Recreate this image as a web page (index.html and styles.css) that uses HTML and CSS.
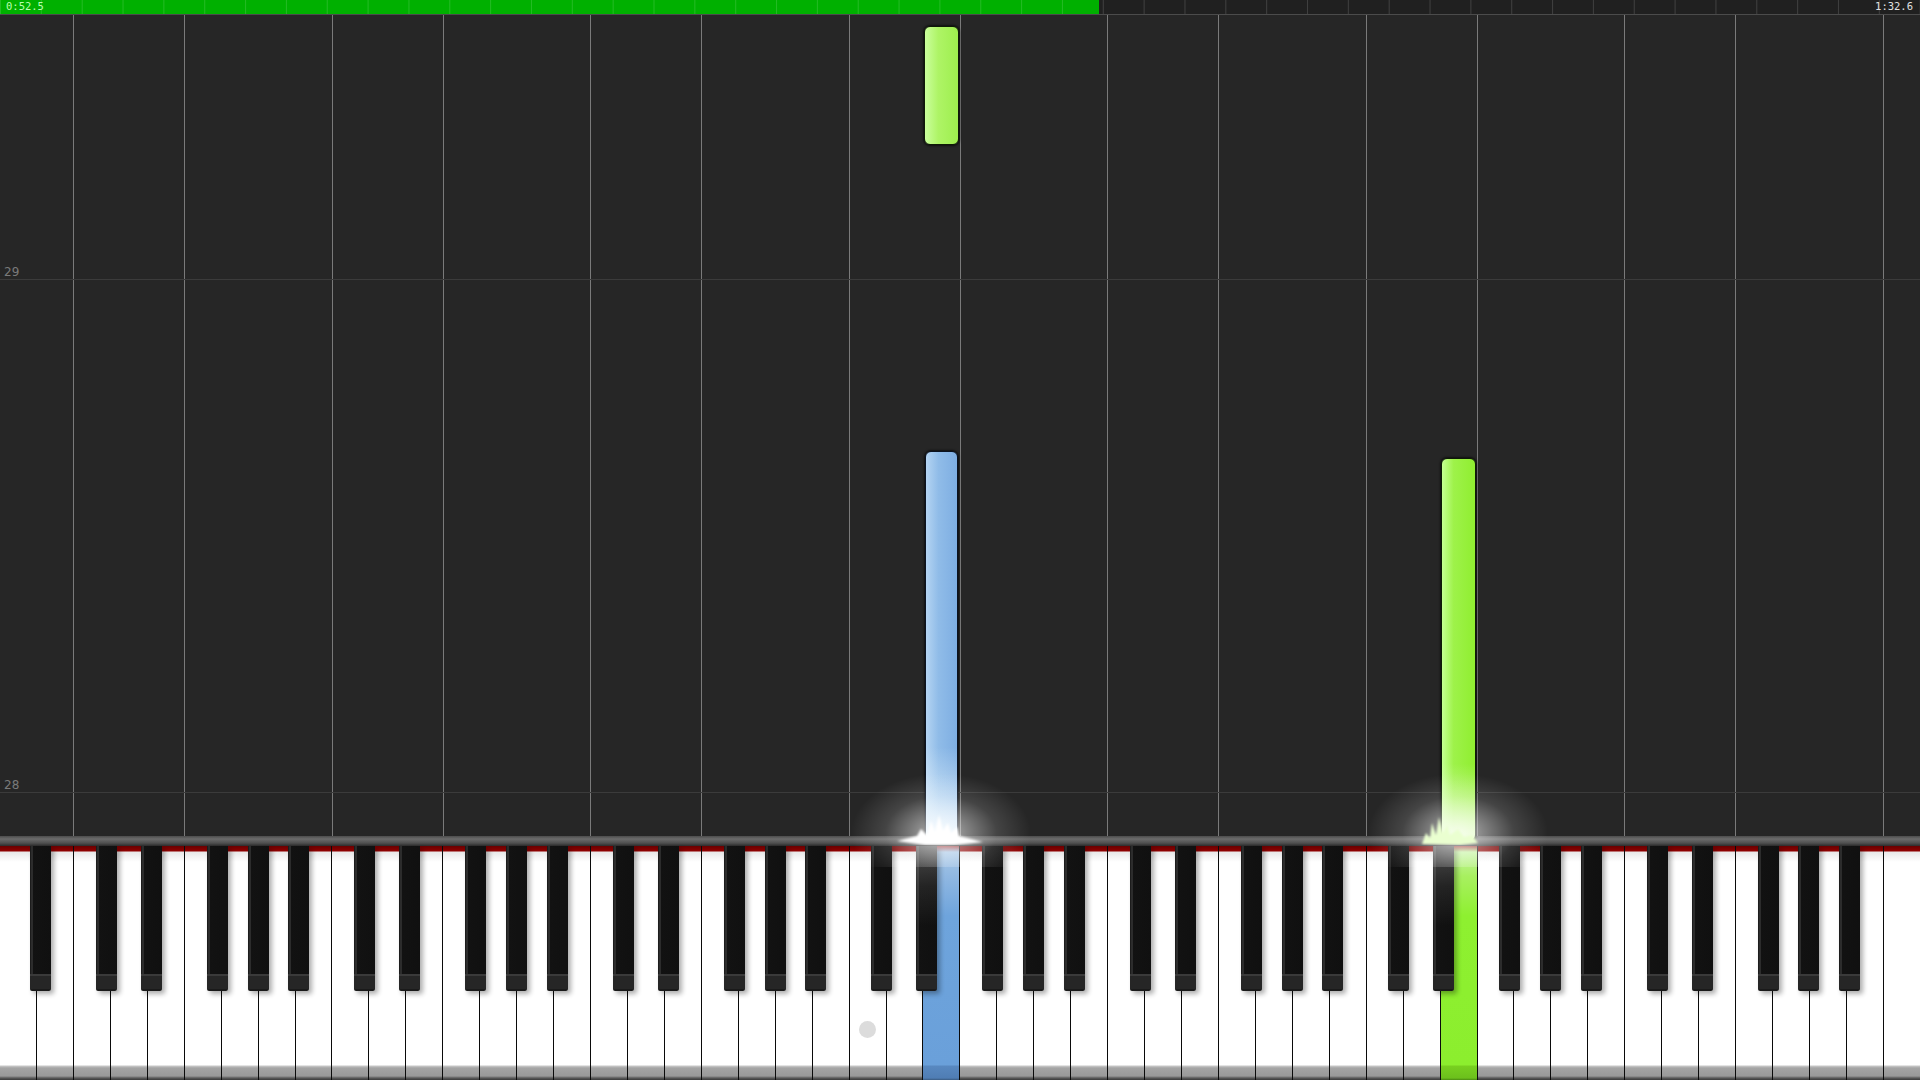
FILE: index.html
```html
<!DOCTYPE html>
<html>
<head>
<meta charset="utf-8">
<link rel="stylesheet" href="styles.css">
</head>
<body>
<div class="topbar">
  <span class="time cur">0:52.5</span>
  <span class="time total">1:32.6</span>
</div>
<div class="roll">
  <div class="vline" style="left:73px"></div>
  <div class="vline" style="left:184px"></div>
  <div class="vline" style="left:332px"></div>
  <div class="vline" style="left:443px"></div>
  <div class="vline" style="left:590px"></div>
  <div class="vline" style="left:701px"></div>
  <div class="vline" style="left:849px"></div>
  <div class="vline" style="left:960px"></div>
  <div class="vline" style="left:1107px"></div>
  <div class="vline" style="left:1218px"></div>
  <div class="vline" style="left:1366px"></div>
  <div class="vline" style="left:1477px"></div>
  <div class="vline" style="left:1624px"></div>
  <div class="vline" style="left:1735px"></div>
  <div class="vline" style="left:1883px"></div>

  <div class="measure" style="top:264px"><span class="mlabel">29</span></div>
  <div class="measure" style="top:777px"><span class="mlabel">28</span></div>

  <div class="note green light" style="left:924px;top:11px;height:119px"></div>
  <div class="note blue" style="left:925px;top:436px;height:390px"></div>
  <div class="note green" style="left:1441px;top:443px;height:383px"></div>

  <div class="glow" style="left:851px;top:722px"></div>
  <div class="glow" style="left:1368px;top:722px"></div>

  <svg class="spark" style="left:895px;top:790px" width="90" height="40" viewBox="0 0 90 40">
    <defs><filter id="sb"><feGaussianBlur stdDeviation="1"/></filter></defs>
    <polygon filter="url(#sb)" fill="#ffffff" points="2,36 22,31 26,24 32,30 36,16 40,27 44,10 48,26 53,18 56,28 62,22 64,31 88,37 60,40 30,40"/>
  </svg>
  <svg class="spark" style="left:1420px;top:790px" width="70" height="40" viewBox="0 0 70 40">
    <defs><filter id="sg"><feGaussianBlur stdDeviation="1"/></filter></defs>
    <polygon filter="url(#sg)" fill="#eaffd0" points="2,39 6,28 10,33 12,18 16,30 19,12 23,28 27,20 30,30 38,24 44,32 52,30 58,38 40,40"/>
  </svg>
</div>
<div class="keyboard">
  <div class="kb-bar"></div>
  <div class="keys">
    <div class="whites">
      <div class="wk"></div><div class="wk"></div>
      <div class="wk"></div><div class="wk"></div><div class="wk"></div><div class="wk"></div><div class="wk"></div><div class="wk"></div><div class="wk"></div>
      <div class="wk"></div><div class="wk"></div><div class="wk"></div><div class="wk"></div><div class="wk"></div><div class="wk"></div><div class="wk"></div>
      <div class="wk"></div><div class="wk"></div><div class="wk"></div><div class="wk"></div><div class="wk"></div><div class="wk"></div><div class="wk"></div>
      <div class="wk"><span class="mc-dot"></span></div><div class="wk"></div><div class="wk pressed-blue"></div><div class="wk"></div><div class="wk"></div><div class="wk"></div><div class="wk"></div>
      <div class="wk"></div><div class="wk"></div><div class="wk"></div><div class="wk"></div><div class="wk"></div><div class="wk"></div><div class="wk"></div>
      <div class="wk"></div><div class="wk"></div><div class="wk pressed-green"></div><div class="wk"></div><div class="wk"></div><div class="wk"></div><div class="wk"></div>
      <div class="wk"></div><div class="wk"></div><div class="wk"></div><div class="wk"></div><div class="wk"></div><div class="wk"></div><div class="wk"></div>
      <div class="wk"></div>
    </div>
    <div class="bk" style="left:29.9px"></div>
    <div class="bk" style="left:96.0px"></div><div class="bk" style="left:140.7px"></div><div class="bk" style="left:206.7px"></div><div class="bk" style="left:247.7px"></div><div class="bk" style="left:288.4px"></div>
    <div class="bk" style="left:354.4px"></div><div class="bk" style="left:399.2px"></div><div class="bk" style="left:465.2px"></div><div class="bk" style="left:506.1px"></div><div class="bk" style="left:546.8px"></div>
    <div class="bk" style="left:612.9px"></div><div class="bk" style="left:657.6px"></div><div class="bk" style="left:723.7px"></div><div class="bk" style="left:764.6px"></div><div class="bk" style="left:805.3px"></div>
    <div class="bk" style="left:871.4px"></div><div class="bk lit" style="left:916.1px"></div><div class="bk" style="left:982.1px"></div><div class="bk" style="left:1023.1px"></div><div class="bk" style="left:1063.8px"></div>
    <div class="bk" style="left:1129.8px"></div><div class="bk" style="left:1174.5px"></div><div class="bk" style="left:1240.6px"></div><div class="bk" style="left:1281.5px"></div><div class="bk" style="left:1322.2px"></div>
    <div class="bk" style="left:1388.3px"></div><div class="bk lit" style="left:1433.0px"></div><div class="bk" style="left:1499.1px"></div><div class="bk" style="left:1540.0px"></div><div class="bk" style="left:1580.7px"></div>
    <div class="bk" style="left:1646.7px"></div><div class="bk" style="left:1691.5px"></div><div class="bk" style="left:1757.5px"></div><div class="bk" style="left:1798.4px"></div><div class="bk" style="left:1839.2px"></div>
  </div>
</div>
</body>
</html>
```

FILE: styles.css
```css
* { box-sizing: border-box; }
html, body { margin: 0; padding: 0; }
body {
  width: 1920px;
  height: 1080px;
  overflow: hidden;
  background: #262626;
  display: flex;
  flex-direction: column;
  font-family: "DejaVu Sans", sans-serif;
}

/* progress / time bar */
.topbar {
  height: 15px;
  flex: none;
  display: flex;
  justify-content: space-between;
  align-items: flex-start;
  padding: 0 7px 0 6px;
  border-bottom: 1px solid #4b4b4b;
  background:
    linear-gradient(to right, rgba(255,255,255,0.14) 0 1px, transparent 1px) 40.85px 0 / 40.85px 100% repeat-x,
    linear-gradient(to right, #00b000 0 1099px, #202020 1099px);
}
.time {
  font-family: "DejaVu Sans Mono", monospace;
  font-size: 10.5px;
  line-height: 13px;
}
.time.cur { color: #b8ffb0; }
.time.total { color: #e0e0e0; }

/* piano roll */
.roll {
  flex: 1;
  position: relative;
  z-index: 2;
  background: #262626;
}
.vline {
  position: absolute;
  top: 0;
  bottom: 0;
  width: 1px;
  background: #7a7a7a;
}
.measure {
  position: absolute;
  left: 0;
  right: 0;
  height: 1px;
  background: #3b3b3b;
}
.mlabel {
  position: absolute;
  left: 4px;
  bottom: 2px;
  font-size: 12px;
  line-height: 12px;
  color: #7a7a7a;
}

.note {
  position: absolute;
  width: 35px;
  border-radius: 6px;
  border: 1px solid #0e1a06;
  box-shadow: 0 0 2px 1px rgba(0,0,0,0.6);
}
.note.green {
  background: linear-gradient(to right, #c4ff92 0%, #9ef24a 35%, #90ee30 100%);
}
.note.green.light {
  background: linear-gradient(to right, #caff9c 0%, #aef466 40%, #9eee4e 100%);
}
.note.blue {
  width: 33px;
  border-color: #0a1220;
  background:
    linear-gradient(to bottom, rgba(255,255,255,0) 0%, rgba(255,255,255,0) 76%, rgba(240,250,255,0.9) 100%),
    linear-gradient(to right, #b4d4f2 0%, #90bce8 40%, #7eaee2 100%);
}
.note.green:not(.light) {
  background:
    linear-gradient(to bottom, rgba(255,255,255,0) 0%, rgba(255,255,255,0) 80%, rgba(240,255,220,0.85) 100%),
    linear-gradient(to right, #c4ff92 0%, #9ef24a 35%, #90ee30 100%);
}

.glow {
  position: absolute;
  width: 180px;
  height: 130px;
  background: radial-gradient(ellipse 50% 46% at 50% 74%, rgba(255,255,255,0.7) 0%, rgba(255,255,255,0.42) 30%, rgba(255,255,255,0.14) 62%, rgba(255,255,255,0) 100%);
  pointer-events: none;
}
.spark {
  position: absolute;
}

/* keyboard */
.keyboard {
  height: 244px;
  flex: none;
  position: relative;
  z-index: 1;
  display: flex;
  flex-direction: column;
}
.kb-bar {
  height: 10px;
  background: linear-gradient(to bottom, #4c4c4c 0%, #6c6c6c 30%, #505050 70%, #2c2c2c 100%);
}
.keys {
  flex: 1;
  position: relative;
}
.whites {
  display: flex;
  height: 100%;
}
.wk {
  flex: 1;
  height: 100%;
  border-right: 1px solid #0a0a0a;
  display: flex;
  flex-direction: column;
  align-items: center;
  background:
    linear-gradient(to bottom, #6a0000 0px, #900000 5px, #e8e8e8 6px, #ffffff 16px, #ffffff 219px, #c8c8c8 220px, #a4a4a4 222px, #999999 230px, #5a5a5a 232px, #3a3a3a 234px);
}
.wk:last-child { border-right: none; }
.wk.pressed-blue {
  background:
    linear-gradient(to bottom, #9a3030 0px, #a6c6e6 6px, #90b8e2 30px, #6ea4dc 70px, #6aa0da 219px, #5888c0 220px, #4f7db4 232px, #3a5a80 234px);
}
.wk.pressed-green {
  background:
    linear-gradient(to bottom, #9a3030 0px, #c4f4a0 6px, #a8f060 30px, #8ef030 70px, #8cee2e 219px, #78d020 220px, #6cc01c 232px, #4a8a12 234px);
}
.mc-dot {
  width: 17px;
  height: 17px;
  border-radius: 50%;
  background: #dcdcdc;
  margin-top: 175px;
}
.bk {
  position: absolute;
  top: 0;
  width: 21px;
  height: 145px;
  border-radius: 0 0 2px 2px;
  background:
    linear-gradient(to bottom, transparent 0 128px, #3a3a3a 128px 130px, #262626 130px 143px, #1a1a1a 143px),
    linear-gradient(to right, #1c1c1c 0 1px, #2c2c2c 1px 3px, #121212 3px, #101010 100%);
  box-shadow: 3px 3px 5px rgba(0,0,0,0.32);
}
.bk.lit {
  background:
    linear-gradient(to bottom, rgba(255,255,255,0.25) 0, rgba(255,255,255,0.08) 40px, transparent 80px),
    linear-gradient(to bottom, transparent 0 128px, #3a3a3a 128px 130px, #262626 130px 143px, #1a1a1a 143px),
    linear-gradient(to right, #1c1c1c 0 1px, #2c2c2c 1px 3px, #121212 3px, #101010 100%);
}
```
